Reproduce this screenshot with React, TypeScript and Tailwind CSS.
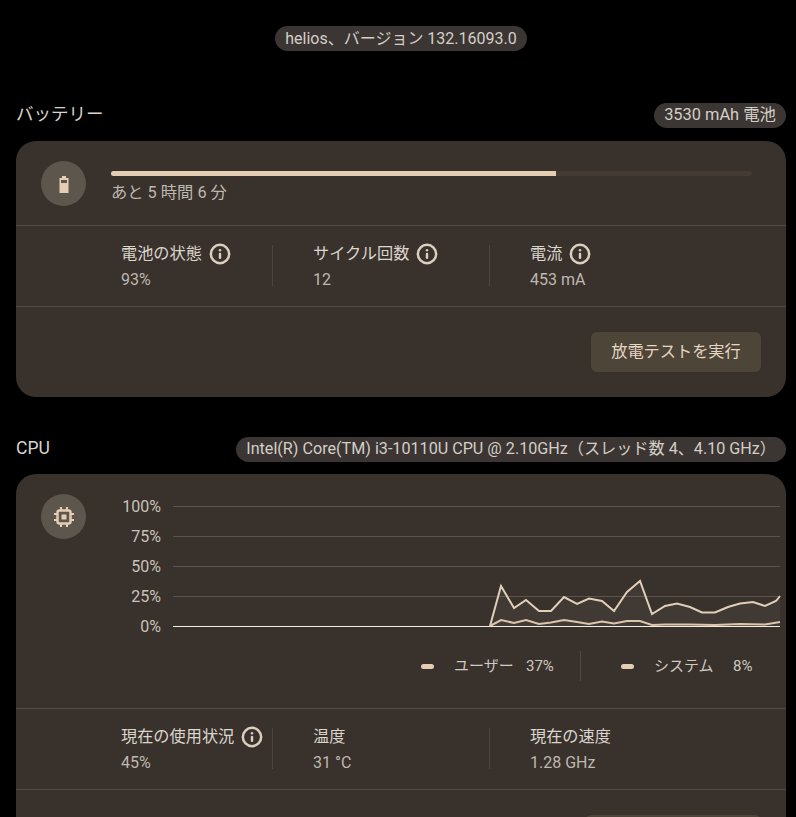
import { Info } from 'lucide-react';

const upper =
  '490,626 501,586 514,608 526,600 539,611 551,611 564,597 577,604 589,598.5 602,601 614,611 627,592 640,581 652,614 665,606 677,603.5 690,607 702,612.5 715,612.5 728,607 740,603.5 753,602 765,606 776,601 780,596';
const lower =
  '490,626 501,620 514,623 526,620 539,624 551,622.5 564,620 577,622 589,624 602,621.5 614,623.5 627,621 640,621 652,625 665,624.5 690,624.5 715,625 740,624 765,624.5 780,622';

const gridLines = [
  { label: '100%', y: 506 },
  { label: '75%', y: 536 },
  { label: '50%', y: 566 },
  { label: '25%', y: 596 },
  { label: '0%', y: 626 },
];

function Pill({ children, size = 'text-[16px]' }: { children: React.ReactNode; size?: string }) {
  return (
    <span
      className={`inline-flex h-[25px] items-center whitespace-nowrap rounded-full bg-[#3b3633] px-[10px] text-[#d4cec6] ${size}`}
    >
      {children}
    </span>
  );
}

function Stat({
  label,
  value,
  info,
  width,
  divider,
}: {
  label: string;
  value: string;
  info?: boolean;
  width: string;
  divider?: boolean;
}) {
  return (
    <div className={`flex h-[41px] flex-col ${width} ${divider ? 'border-r border-[#4c4640]' : ''}`}>
      <div className="-mt-[2px] flex h-[22px] shrink-0 items-center gap-[7px] text-[16.2px] leading-none text-[#dcd5cc]">
        {label}
        {info && <Info size={22} strokeWidth={2.7} className="text-[#dccfbe]" />}
      </div>
      <div className="mt-[5px] shrink-0 text-[16px] leading-[20px] text-[#bfb8af]">{value}</div>
    </div>
  );
}

function StatsRow({ children }: { children: React.ReactNode }) {
  return (
    <div className="flex h-[82px] items-start border-y border-[#4f4a44] pl-[105px] pt-[19px]">{children}</div>
  );
}

function IconCircle({ children }: { children: React.ReactNode }) {
  return (
    <div className="flex h-[45px] w-[45px] shrink-0 items-center justify-center rounded-full bg-[#5d564c]">
      {children}
    </div>
  );
}

export default function App() {
  return (
    <div
      className="h-[817px] overflow-hidden bg-black pl-4 pr-[10px]"
      style={{ fontFamily: 'Roboto, "Noto Sans CJK JP", sans-serif' }}
    >
      <div className="flex justify-center pt-[26px]">
        <Pill>helios、バージョン 132.16093.0</Pill>
      </div>

      <section className="mt-[52px]">
        <div className="flex h-[25px] items-center justify-between">
          <h2 className="-mt-[2px] text-[17.5px] text-[#d8d4ce]">バッテリー</h2>
          <Pill size="text-[16.4px]">3530 mAh 電池</Pill>
        </div>
        <div className="mt-[13px] h-[256px] rounded-[20px] bg-[#38312c]">
          <div className="flex h-[84px] pl-[25px] pt-[20px]">
            <IconCircle>
              <svg width="14" height="20" viewBox="0 0 14 20">
                <path d="M5 2h4v2h2.500v15h-9V4H5z" fill="#e5cdb3" />
                <rect x="4" y="6" width="6" height="3" fill="#5d564c" />
              </svg>
            </IconCircle>
            <div className="ml-[25px] w-[641px] pt-[10px]">
              <div className="h-[5px] w-full rounded-full bg-[#453b33]">
                <div className="h-[5px] w-[445px] rounded-l-full bg-[#e5cdb3]" />
              </div>
              <p className="mt-[6px] text-[16.3px] leading-[22px] text-[#bfb8af]">あと 5 時間 6 分</p>
            </div>
          </div>
          <StatsRow>
            <Stat label="電池の状態" value="93%" info width="w-[152px]" divider />
            <div className="w-[40px]" />
            <Stat label="サイクル回数" value="12" info width="w-[177px]" divider />
            <div className="w-[40px]" />
            <Stat label="電流" value="453 mA" info width="w-[150px]" />
          </StatsRow>
          <div className="flex justify-end pr-[25px] pt-[25px]">
            <button className="h-[40px] w-[170px] rounded-[6px] bg-[#4e4539] text-[16.2px] text-[#e6d5c0]">
              放電テストを実行
            </button>
          </div>
        </div>
      </section>

      <section className="mt-[40px]">
        <div className="flex h-[25px] items-center justify-between">
          <h2 className="-mt-[2px] text-[17.5px] text-[#d8d4ce]">CPU</h2>
          <Pill size="text-[16.15px]">Intel(R) Core(TM) i3-10110U CPU @ 2.10GHz（スレッド数 4、4.10 GHz）</Pill>
        </div>
        <div className="mt-[12px] rounded-t-[20px] bg-[#38312c] pb-[60px]">
          <div className="flex h-[234px] pl-[25px] pt-[20px]">
            <IconCircle>
              <svg width="24" height="24" viewBox="0 0 24 24" fill="none" stroke="#e5cdb3">
                <rect x="5.500" y="5.500" width="13" height="13" rx="2" strokeWidth="2.500" />
                <rect x="9.500" y="9.500" width="5" height="5" fill="#e5cdb3" strokeWidth="0" />
                <path
                  d="M9 2v3M15 2v3M9 19v3M15 19v3M2 9h3M2 15h3M19 9h3M19 15h3"
                  strokeWidth="2.200"
                />
              </svg>
            </IconCircle>
            <div className="relative ml-[12px] w-[668px]">
              <svg
                className="absolute left-0 top-0"
                width="668"
                height="150"
                viewBox="98 494 668 150"
                overflow="visible"
              >
                {gridLines.slice(0, 4).map((line) => (
                  <line key={line.y} x1="173" x2="780" y1={line.y + 0.5} y2={line.y + 0.5} stroke="#5a544d" />
                ))}
                <polygon points={`${upper} 780,626`} fill="#e5cdb3" fillOpacity="0.06" />
                <polyline points={upper} fill="none" stroke="#e0cfb9" strokeWidth="2" />
                <polyline points={lower} fill="none" stroke="#dcc5ab" strokeWidth="2" />
                <line x1="173" x2="780" y1="626.5" y2="626.5" stroke="#f3ece3" strokeWidth="1" />
                {gridLines.map((line) => (
                  <text
                    key={line.label}
                    x="161"
                    y={line.y + 5.5}
                    textAnchor="end"
                    fontSize="16"
                    fill="#c9c2b9"
                  >
                    {line.label}
                  </text>
                ))}
              </svg>
              <div className="absolute left-[323px] top-[157px] flex h-[30px] items-center text-[15px] text-[#d0c9c0]">
                <span className="h-[5px] w-[13px] rounded-full bg-[#e5cdb3]" />
                <span className="ml-[20px] w-[72px]">ユーザー</span>
                <span className="w-[54px]">37%</span>
                <span className="h-[30px] w-px bg-[#4f4a44]" />
                <span className="ml-[40px] h-[5px] w-[13px] rounded-full bg-[#e5cdb3]" />
                <span className="ml-[20px] w-[79px]">システム</span>
                <span>8%</span>
              </div>
            </div>
          </div>
          <StatsRow>
            <Stat label="現在の使用状況" value="45%" info width="w-[152px] whitespace-nowrap" divider />
            <div className="w-[40px]" />
            <Stat label="温度" value="31 °C" width="w-[177px]" divider />
            <div className="w-[40px]" />
            <Stat label="現在の速度" value="1.28 GHz" width="w-[150px]" />
          </StatsRow>
          <div className="flex justify-end pr-[25px] pt-[25px]">
            <div className="h-[40px] w-[176px] rounded-[6px] bg-[#4e4539]" />
          </div>
        </div>
      </section>
    </div>
  );
}
